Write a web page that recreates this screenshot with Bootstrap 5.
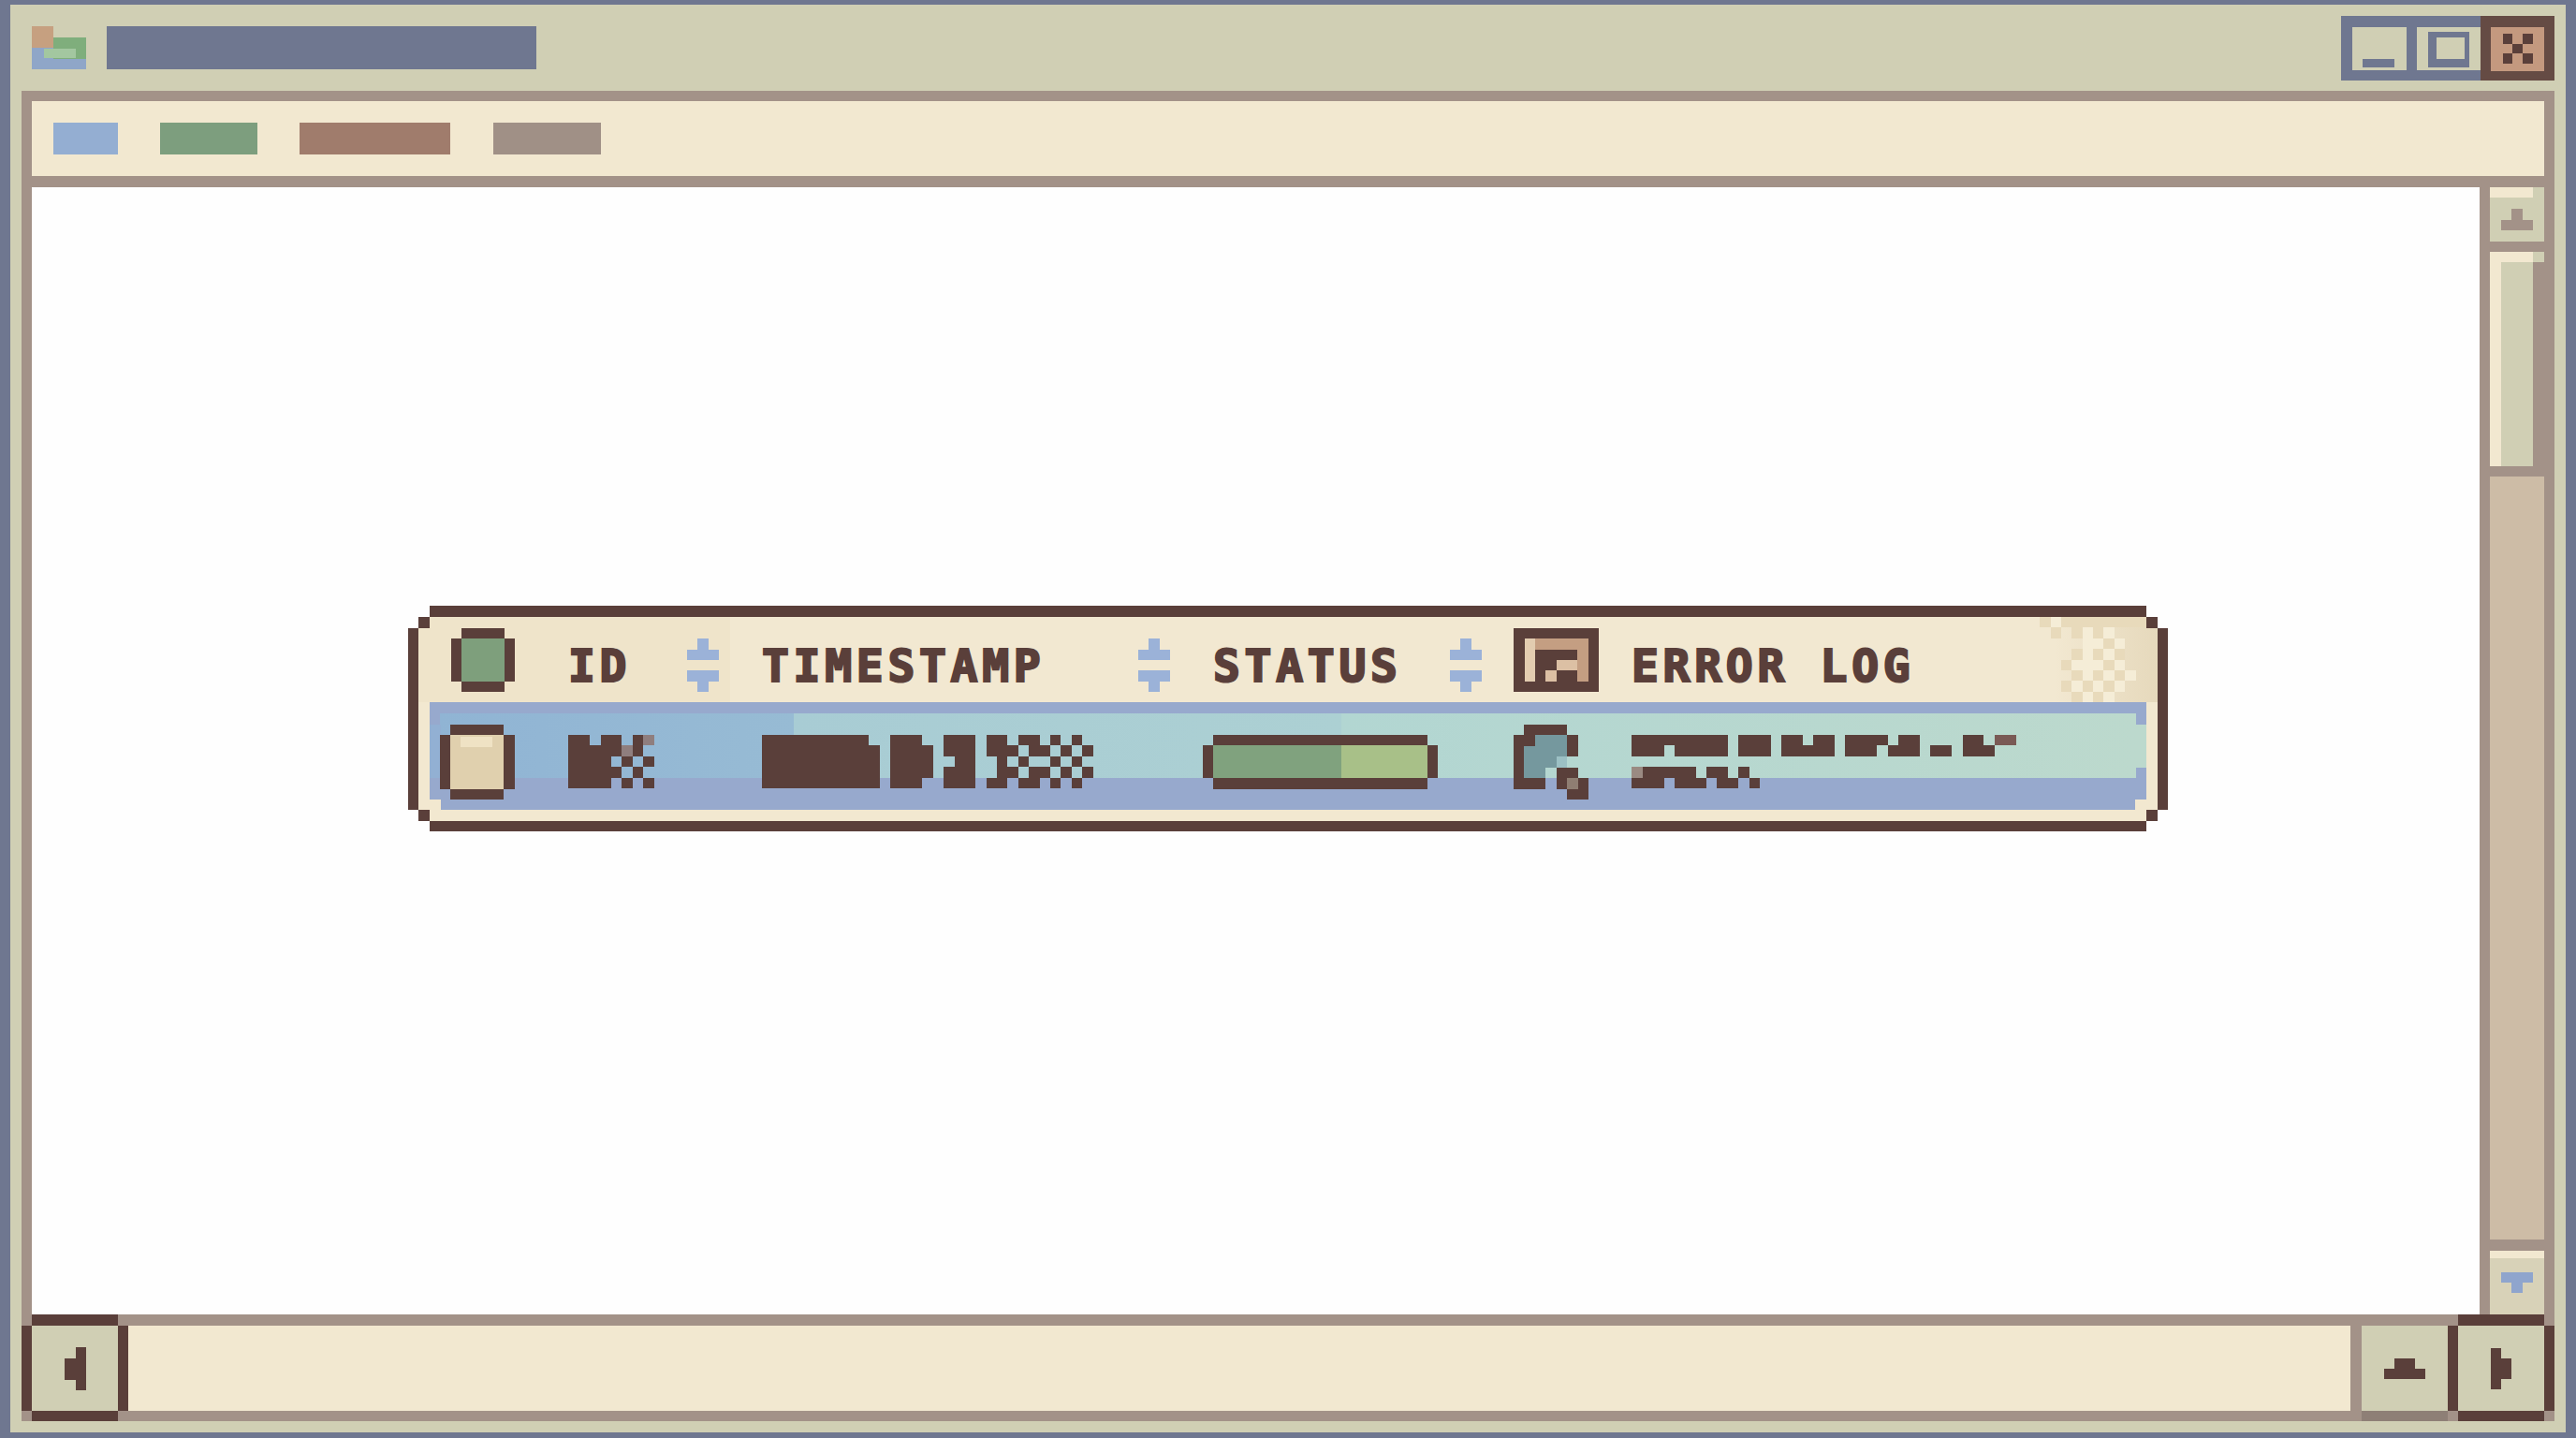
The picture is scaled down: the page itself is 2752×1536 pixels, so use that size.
<!DOCTYPE html>
<html lang="en">
<head>
<meta charset="utf-8">
<title>Log table window</title>
<link rel="stylesheet" href="https://cdn.jsdelivr.net/npm/bootstrap@5.3.0/dist/css/bootstrap.min.css">
<style>
:root{--slate:#6f7790;--beige:#d0cfb4;--taupe:#a39288;--cream:#f2e8d0;--ink:#5a3f3a;--sky:#9bb2d8}
html,body{margin:0;height:100%;overflow:hidden;background:var(--slate)}
svg{display:block;flex:none;shape-rendering:crispEdges}
.shell{width:2752px;height:1536px;background:var(--beige);border-style:solid;border-color:var(--slate);border-width:5px 11px 6px}
.titlebar{height:92px;padding:0 12px 0 23px}
.app-glyph{width:58px;height:46px;margin-right:22px}
.title-slot{width:459px;height:46px;background:var(--slate)}
.win-controls{height:69px}
.win-blue{background:var(--slate);padding:12px 0 11px 12px;gap:11px}
.win-min{width:58px;background:var(--beige);padding:34px 13px 3px 11px}
.win-max{width:68px;background:var(--beige);padding:5px 12px 3px 12px}
.win-close{width:79px;background:#654b44;padding:12px 11px 10px}
.win-close-face{background:#c4997f}
.frame{background:var(--taupe);margin:0 12px 12px;padding:11px}
.menu-row{height:80px;background:var(--cream);padding-left:23px;gap:45px;margin-bottom:12px}
.menu-tag{height:34px;display:block}
.tag-a{width:69px;background:#94aed2}
.tag-b{width:104px;background:#7d9e7e}
.tag-c{width:161px;background:#a07c6c}
.tag-d{width:115px;background:#a09086;margin-left:1px}
.middle{min-height:0;margin-bottom:12px;gap:11px}
.canvas-pane{background:#fefefe;padding:459px 0 0 413px;min-width:0}
.vbar{width:58px}
.v-up{height:58px;margin-bottom:11px;padding-top:23px;background:linear-gradient(var(--cream),var(--cream)) left top/46px 11px no-repeat,var(--beige)}
.v-thumb{height:229px;margin-bottom:11px;background:linear-gradient(var(--beige),var(--beige)) right top/12px 11px no-repeat,linear-gradient(var(--cream),var(--cream)) left top/46px 11px no-repeat,linear-gradient(90deg,var(--cream) 12px,var(--beige) 12px,var(--beige) 46px,var(--taupe) 46px)}
.v-track{background:#cdbca6;margin-bottom:12px}
.v-down{height:68px;padding-top:22px;background:linear-gradient(var(--cream),var(--cream)) left top/100% 8px no-repeat,#d8d2b8}
.bottom-row{height:91px}
.h-btn{width:92px;background:var(--beige)}
.h-btn.boxed{box-shadow:0 -12px 0 var(--ink),0 11px 0 var(--ink),-11px 0 0 var(--ink),11px 0 0 var(--ink)}
.h-left{margin-right:11px}
.h-mid{margin-left:12px;margin-right:11px;box-shadow:0 11px 0 #8e7f76}
.h-track{background:var(--cream)}
.log-panel{width:1858px;height:218px;background:var(--cream);box-shadow:0 -24px 0 -12px var(--ink),0 23px 0 -12px var(--ink),-23px 0 0 -12px var(--ink),23px 0 0 -12px var(--ink)}
.log-panel::after{content:"";position:absolute;inset:0;pointer-events:none;background:linear-gradient(var(--ink),var(--ink)) 0 0/12px 12px no-repeat,linear-gradient(var(--ink),var(--ink)) 100% 0/12px 12px no-repeat,linear-gradient(var(--ink),var(--ink)) 0 100%/12px 12px no-repeat,linear-gradient(var(--ink),var(--ink)) 100% 100%/12px 12px no-repeat}
.dither{position:absolute;left:1732px;top:0;width:114px;height:91px}
.log-head{display:grid;grid-template-columns:160px 207px 482px 321px 1fr;height:91px;padding-top:12px;background:linear-gradient(90deg,#efe4ca 0 333px,#f2e8d1 333px calc(100% - 110px),#e6d9bc 100%)}
.log-row{display:grid;grid-template-columns:148px 207px 471px 332px 1fr;height:115px;margin:0 12px;padding-top:24px;background:linear-gradient(var(--cream),var(--cream)) left bottom/12px 11px no-repeat,linear-gradient(var(--cream),var(--cream)) right bottom/12px 11px no-repeat,linear-gradient(#92b0d3,#92b0d3) left 0 top 24px/12px 57px no-repeat,linear-gradient(#bcd9cd,#bcd9cd) right 0 top 24px/12px 46px no-repeat,linear-gradient(90deg,#90b4d4 0,#97bbd4 378px,#a8ccd4 378px,#acd0d3 963px,#b2d6d2 963px,#bcd9cd 100%) left 11px top 12px/calc(100% - 22px) 69px no-repeat,#97a9cd}
.cell-first{padding-left:35px}
.cell-first-row{padding-left:11px}
.pad-a{padding-right:46px}
.pad-b{padding-right:34px}
.col-name{font-family:"DejaVu Sans Mono","Liberation Mono",monospace;font-weight:700;font-size:48px;line-height:1;letter-spacing:4.7px;color:var(--ink);margin-top:16px;white-space:nowrap;-webkit-text-stroke:2.2px var(--ink)}
.sort-glyph{width:34px;height:57px;margin-top:11px}
.drop{margin-top:11px}
.err-head{gap:35px}
.err-row{gap:46px}
</style>
</head>
<body>
<div class="shell d-flex flex-column">
  <div class="titlebar d-flex align-items-center">
    <svg class="app-glyph" viewBox="0 0 58 46"><rect y="23" width="58" height="23" fill="#8fa6c8"/><rect x="23" y="12" width="35" height="23" fill="#7fae7c"/><rect x="13" y="24" width="34" height="10" fill="#a3c7a0"/><rect width="23" height="23" fill="#c6a080"/></svg>
    <div class="title-slot"></div>
    <div class="win-controls d-flex ms-auto">
      <div class="win-blue d-flex">
        <div class="win-min"><svg width="34" height="9" viewBox="0 0 34 9"><rect width="34" height="9" fill="#6f7790"/></svg></div>
        <div class="win-max"><svg width="44" height="38" viewBox="0 0 44 38"><path fill="#6f7790" fill-rule="evenodd" d="M0 0H44V38H0ZM9 6V29H39V6Z"/></svg></div>
      </div>
      <div class="win-close d-flex">
        <div class="win-close-face w-100 d-flex align-items-center justify-content-center"><svg width="33" height="32" viewBox="0 0 3 3"><path fill="#5a3f3a" d="M0 0H1V1H0ZM2 0H3V1H2ZM1 1H2V2H1ZM0 2H1V3H0ZM2 2H3V3H2Z"/></svg></div>
      </div>
    </div>
  </div>

  <div class="frame flex-grow-1 d-flex flex-column">
    <div class="menu-row d-flex align-items-center">
      <span class="menu-tag tag-a"></span><span class="menu-tag tag-b"></span><span class="menu-tag tag-c"></span><span class="menu-tag tag-d"></span>
    </div>

    <div class="middle d-flex flex-grow-1">
      <div class="canvas-pane flex-grow-1">
        <div class="log-panel position-relative">
          <div class="log-head">
            <div class="cell-first">
              <svg width="68" height="68" viewBox="0 0 68 68"><path fill="#5a3f3a" d="M11 0H57V11H68V57H57V68H11V57H0V11H11Z"/><rect x="11" y="11" width="46" height="46" fill="#7e9f7c"/></svg>
            </div>
            <div class="d-flex justify-content-between pad-a">
              <span class="col-name">ID</span>
              <svg class="sort-glyph" viewBox="0 0 3 5"><path fill="#9bb2d8" d="M1 0H2V1H3V2H0V1H1ZM0 3H3V4H2V5H1V4H0Z"/></svg>
            </div>
            <div class="d-flex justify-content-between pad-a">
              <span class="col-name">TIMESTAMP</span>
              <svg class="sort-glyph" viewBox="0 0 3 5"><path fill="#9bb2d8" d="M1 0H2V1H3V2H0V1H1ZM0 3H3V4H2V5H1V4H0Z"/></svg>
            </div>
            <div class="d-flex justify-content-between pad-b">
              <span class="col-name">STATUS</span>
              <svg class="sort-glyph" viewBox="0 0 3 5"><path fill="#9bb2d8" d="M1 0H2V1H3V2H0V1H1ZM0 3H3V4H2V5H1V4H0Z"/></svg>
            </div>
            <div class="d-flex err-head">
              <svg width="91" height="68" viewBox="0 0 8 6"><rect width="8" height="6" fill="#5a3f3a"/><rect x="1" y="1" width="1" height="4" fill="#e2ccb0"/><path fill="#c49e82" d="M2 1H7V5H6V2H2Z"/><path fill="#dcc0a4" d="M4 3H6V4H4ZM3 4H4V5H3Z"/></svg>
              <span class="col-name">ERROR LOG</span>
            </div>
          </div>

          <div class="log-row">
            <div class="cell-first-row">
              <svg width="80" height="80" viewBox="0 0 80 80"><path fill="#5a3f3a" d="M11 0H68V11H80V69H68V80H11V69H0V11H11Z"/><rect x="11" y="11" width="57" height="58" fill="#e0d0ae"/><rect x="22" y="13" width="34" height="11" fill="#efe2c4"/></svg>
            </div>
            <div>
              <svg class="drop" width="92" height="57" viewBox="0 0 8 5"><path fill="#5a3f3a" d="M0 0H2V1H3V0H5V2H4V3H5V4H4V5H0ZM6 0H7V2H6ZM5 2H6V3H5ZM7 2H8V3H7ZM6 3H7V4H6ZM5 4H6V5H5ZM7 4H8V5H7Z"/><path fill="#8f7e7e" d="M7 0H8V1H7ZM5 1H6V2H5Z"/></svg>
            </div>
            <div>
              <svg class="drop" width="354" height="57" viewBox="0 0 31 5"><path fill="#5a3f3a" d="M0 0H10V1H11V5H0ZM12 0H15V1H16V4H15V5H12ZM17 0H20V5H17V3H18V2H17ZM21 0H23V1H24V2H23V3H24V4H23V5H21V4H22V2H21ZM24 0H26V1H27V2H25V1H24ZM25 3H27V4H26V5H24V4H25ZM24 2H25V3H24ZM27 0H28V1H27ZM29 0H30V1H29ZM28 1H29V2H28ZM30 1H31V2H30ZM27 2H28V3H27ZM29 2H30V3H29ZM28 3H29V4H28ZM30 3H31V4H30ZM27 4H28V5H27ZM29 4H30V5H29Z"/></svg>
            </div>
            <div>
              <svg class="drop" width="251" height="58" viewBox="0 0 251 58"><path fill="#5a3f3a" d="M11 0H240V11H251V46H240V58H11V46H0V11H11Z"/><rect x="11" y="11" width="137" height="35" fill="#80a27e"/><rect x="148" y="11" width="92" height="35" fill="#a8c088"/></svg>
            </div>
            <div class="d-flex err-row">
              <svg width="80" height="80" viewBox="0 0 7 7"><path fill="#5a3f3a" d="M1 0H5V1H6V3H5V1H2V2H1V5H3V6H0V1H1ZM4 4H6V5H7V7H5V6H4Z"/><path fill="#75989e" d="M2 1H5V3H4V4H3V5H1V2H2Z"/><rect x="4" y="3" width="1" height="1" fill="#9cc0c4"/><rect x="5" y="5" width="1" height="1" fill="#8f7e72"/></svg>
              <svg class="drop" width="411" height="57" viewBox="0 0 36 5"><path fill="#5a3f3a" d="M0 0H9V2H4V1H3V2H0ZM10 0H13V2H10ZM14 0H16V1H17V0H19V2H14ZM20 0H24V1H25V0H27V2H24V1H23V2H20ZM28 1H30V2H28ZM31 0H33V1H34V2H31ZM1 3H6V4H7V3H9V4H10V5H8V4H7V5H4V4H3V5H0V4H1ZM10 3H11V4H10ZM11 4H12V5H11Z"/><rect x="34" width="2" height="1" fill="#7a5a55"/><rect y="3" width="1" height="1" fill="#9a8a82"/></svg>
            </div>
          </div>

          <svg class="dither" viewBox="0 0 10 8" aria-hidden="true">
            <path fill="#e8dabb" d="M0 0H1V1H0ZM2 0H10V1H2ZM1 1H2V2H1ZM3 1H4V2H3ZM5 1H6V2H5ZM6 2H7V3H6ZM3 3H4V4H3ZM5 3H6V4H5ZM7 3H8V4H7ZM2 4H3V5H2ZM6 4H7V5H6ZM3 5H4V6H3ZM5 5H6V6H5ZM7 5H8V6H7ZM2 6H3V7H2ZM4 6H5V7H4ZM6 6H7V7H6ZM3 7H4V8H3ZM5 7H6V8H5Z"/>
            <path fill="#f5edd7" d="M1 0H2V1H1ZM4 1H5V2H4ZM6 1H7V2H6ZM4 2H6V3H4ZM7 2H8V3H7ZM4 3H5V4H4ZM6 3H7V4H6ZM3 4H6V5H3ZM7 4H8V5H7ZM4 5H5V6H4ZM6 5H7V6H6ZM8 5H9V6H8ZM3 6H4V7H3ZM5 6H6V7H5ZM7 6H8V7H7ZM4 7H5V8H4ZM6 7H7V8H6Z"/>
          </svg>
        </div>
      </div>

      <div class="vbar d-flex flex-column">
        <div class="v-up d-flex justify-content-center"><svg width="34" height="23" viewBox="0 0 3 2"><path fill="#a39288" d="M1 0H2V1H3V2H0V1H1Z"/></svg></div>
        <div class="v-thumb"></div>
        <div class="v-track flex-grow-1"></div>
        <div class="v-down d-flex justify-content-center"><svg width="34" height="24" viewBox="0 0 3 2"><path fill="#8fa5cd" d="M0 0H3V1H2V2H1V1H0Z"/></svg></div>
      </div>
    </div>

    <div class="bottom-row d-flex">
      <div class="h-btn boxed h-left d-flex align-items-center justify-content-center"><svg width="23" height="46" viewBox="0 0 2 4"><path fill="#5a3f3a" d="M1 0H2V4H1V3H0V1H1Z"/></svg></div>
      <div class="h-track flex-grow-1"></div>
      <div class="h-btn h-mid d-flex align-items-center justify-content-center"><svg width="46" height="22" viewBox="0 0 4 2"><path fill="#5a3f3a" d="M1 0H3V1H4V2H0V1H1Z"/></svg></div>
      <div class="h-btn boxed d-flex align-items-center justify-content-center"><svg width="22" height="45" viewBox="0 0 2 4"><path fill="#5a3f3a" d="M0 0H1V1H2V3H1V4H0Z"/></svg></div>
    </div>
  </div>
</div>
<script src="https://cdn.jsdelivr.net/npm/bootstrap@5.3.0/dist/js/bootstrap.bundle.min.js"></script>
</body>
</html>
